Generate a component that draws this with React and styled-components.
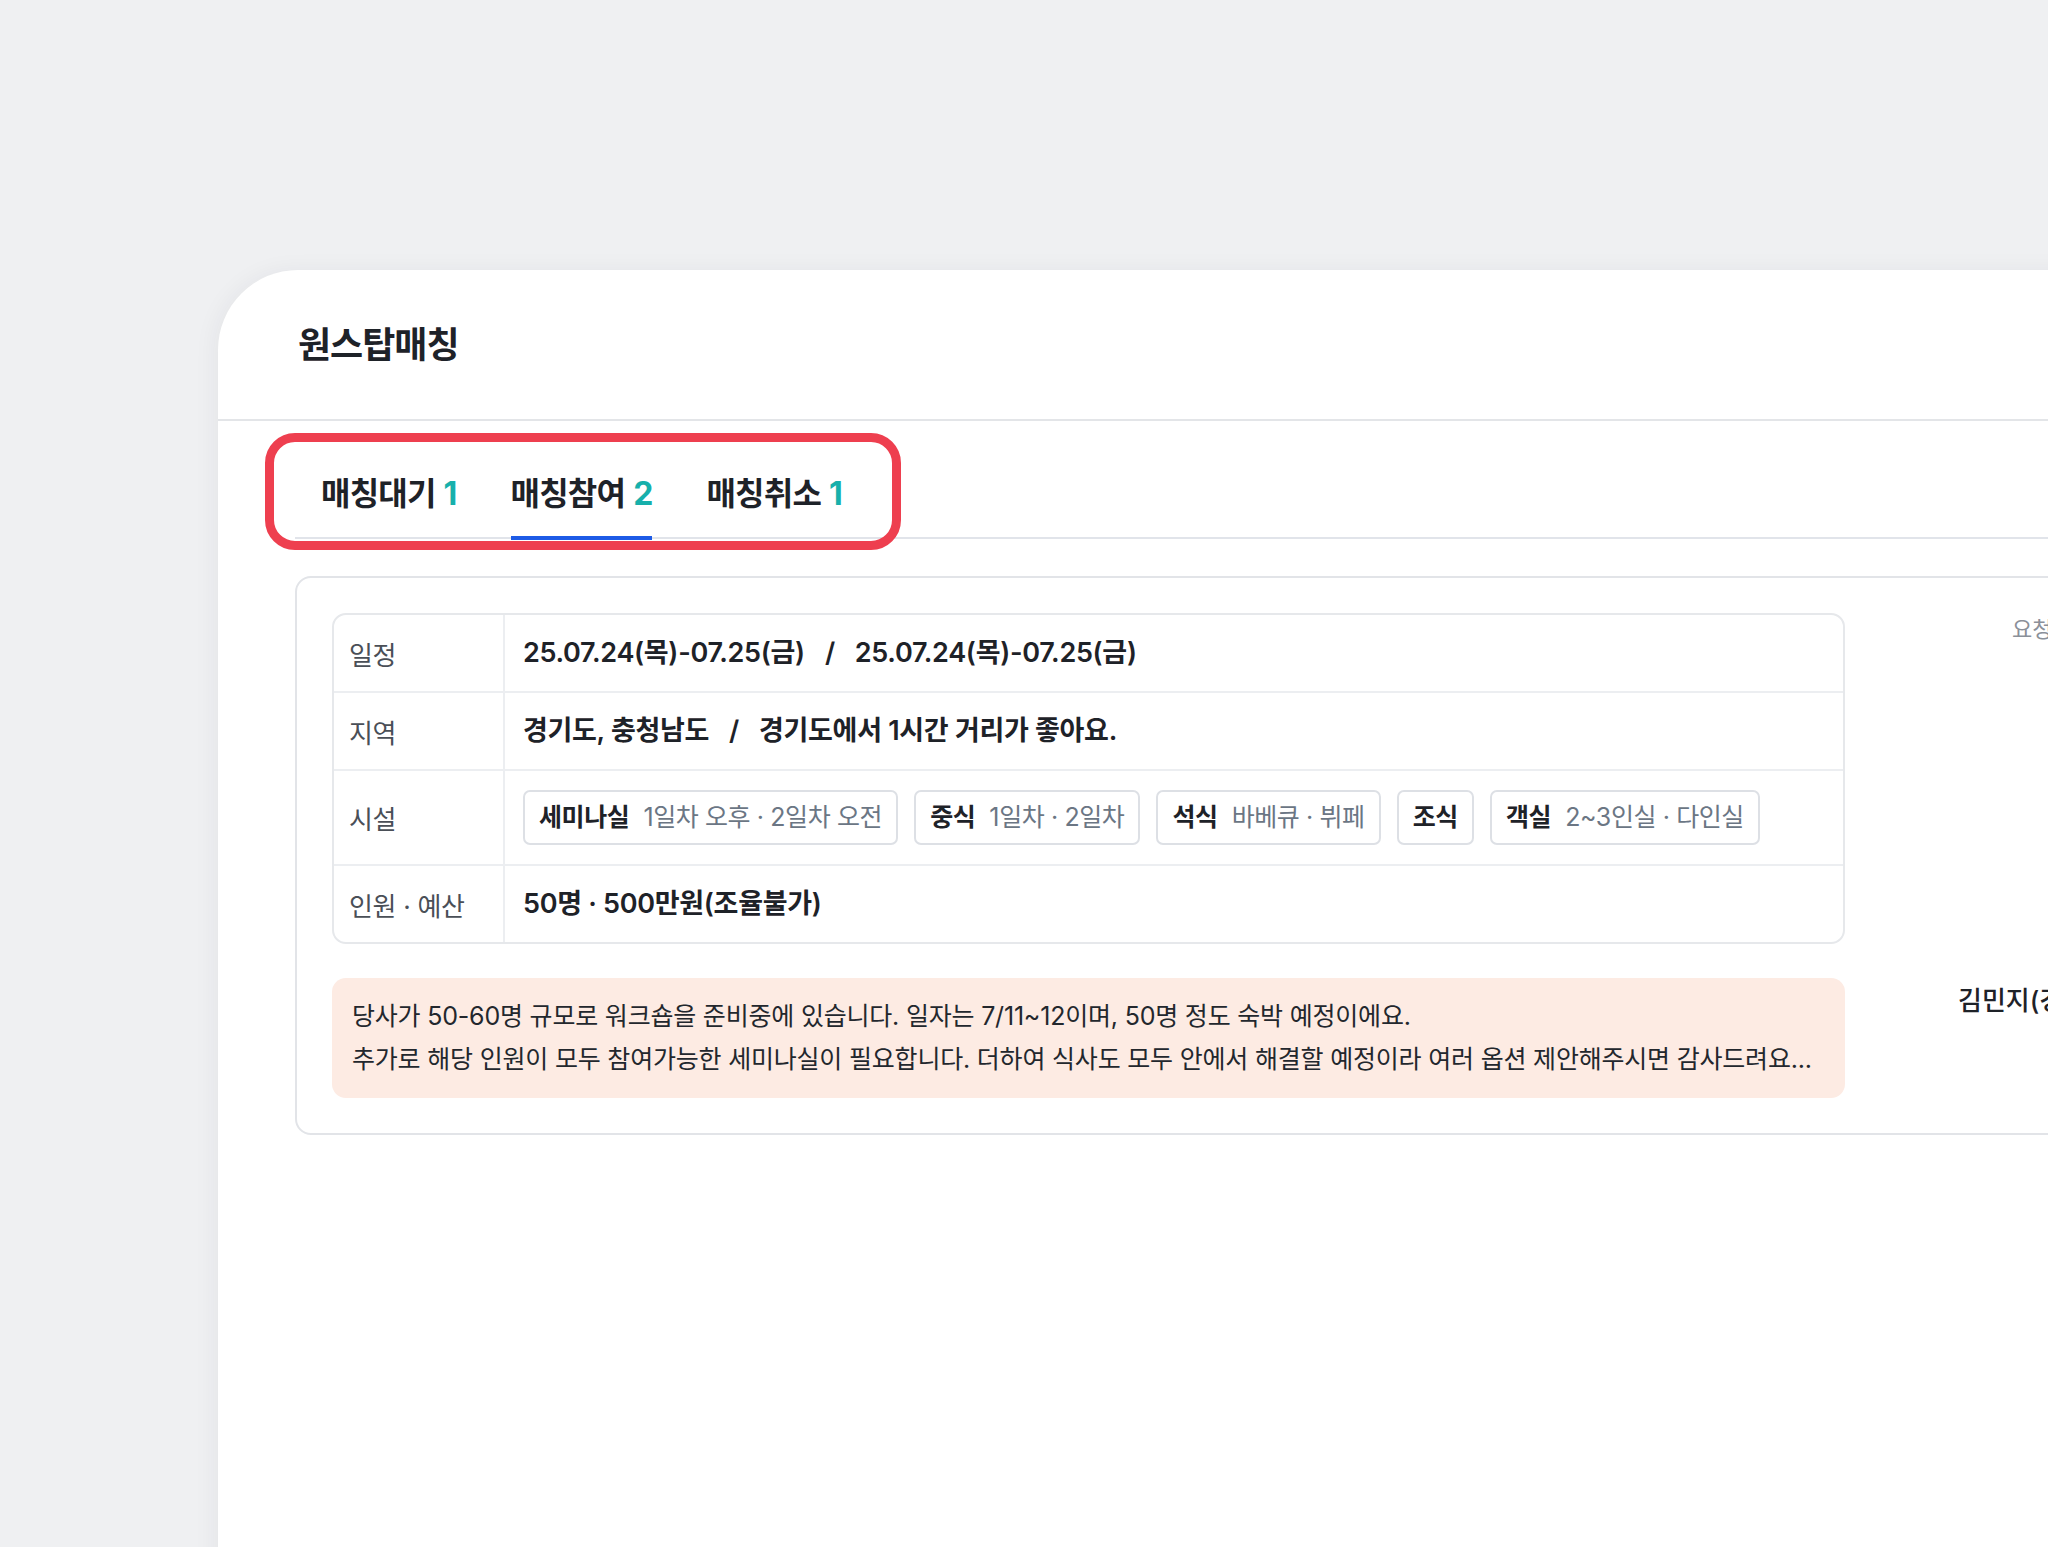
import styled, { createGlobalStyle } from "styled-components";

const GlobalStyle = createGlobalStyle`
  * {
    box-sizing: border-box;
  }

  html,
  body {
    margin: 0;
    padding: 0;
    overflow: hidden;
    background: #eff0f2;
  }

  body {
    font-family: "Inter", "Noto Sans CJK KR", "Noto Sans", sans-serif;
    color: #1e2228;
    -webkit-font-smoothing: antialiased;
  }
`;

const Page = styled.div`
  min-height: 100vh;
  padding: 270px 0 0 218px;
`;

const Panel = styled.section`
  width: 2200px;
  min-height: 1300px;
  background: #ffffff;
  border-top-left-radius: 80px;
  box-shadow: -4px 0 22px rgba(30, 40, 60, 0.05);
`;

const Header = styled.header`
  padding: 50px 0 49px 80px;
  border-bottom: 2px solid #e3e5e8;
`;

const Title = styled.h1`
  margin: 0;
  font-size: 36px;
  line-height: 50px;
  font-weight: 700;
  letter-spacing: -1px;
`;

const Content = styled.div`
  padding-left: 77px;
`;

const TabBar = styled.nav`
  position: relative;
  display: flex;
  gap: 54px;
  padding: 50px 0 0 26px;
  border-bottom: 2px solid #e1e4ea;
`;

const Tab = styled.button`
  margin: 0 0 -3px;
  padding: 0 0 20px;
  background: none;
  border: none;
  border-bottom: 4px solid ${({ $active }) => ($active ? "#1d5be6" : "transparent")};
  font-family: inherit;
  font-size: 32px;
  line-height: 45px;
  font-weight: 700;
  letter-spacing: -0.8px;
  color: #1e2228;
  cursor: pointer;
`;

const Count = styled.span`
  margin-left: 8px;
  color: #17b0ab;
`;

// annotation ring drawn over the tab strip
const Highlight = styled.span`
  position: absolute;
  left: -30px;
  top: 12px;
  width: 636px;
  height: 117px;
  border: 9px solid #ee3f4f;
  border-radius: 30px;
  pointer-events: none;
`;

const Card = styled.article`
  margin-top: 37px;
  padding: 35px;
  border: 2px solid #e2e4e8;
  border-radius: 16px;
  display: grid;
  grid-template-columns: 1513px 1fr;
  column-gap: 113px;
  row-gap: 34px;
`;

const InfoTable = styled.div`
  display: flex;
  flex-direction: column;
  border: 2px solid #e6e8eb;
  border-radius: 14px;
  overflow: hidden;
`;

const InfoRow = styled.div`
  display: grid;
  grid-template-columns: 171px 1fr;

  & + & {
    border-top: 2px solid #eceef1;
  }
`;

const Label = styled.div`
  display: flex;
  align-items: center;
  padding: 0 15px;
  border-right: 2px solid #eceef1;
  font-size: 26px;
  letter-spacing: -0.3px;
  color: #4a4f57;
`;

const Value = styled.div`
  display: flex;
  align-items: center;
  flex-wrap: wrap;
  gap: 16px;
  padding: 19px 18px;
  font-size: 27px;
  line-height: 38px;
  font-weight: 600;
  letter-spacing: -0.3px;
`;

const Sep = styled.span`
  margin: 0 4px;
`;

const Chip = styled.span`
  display: inline-flex;
  align-items: center;
  gap: 14px;
  height: 55px;
  padding: 0 14px;
  border: 2px solid #dde0e5;
  border-radius: 7px;
  font-size: 25px;
  line-height: 33px;
  font-weight: 600;
  letter-spacing: -0.4px;
  color: #1e2228;
`;

const ChipSub = styled.span`
  font-weight: 400;
  color: #6b7684;
`;

const Note = styled.div`
  padding: 17px 20px;
  background: #fdebe3;
  border-radius: 14px;
  font-size: 25px;
  line-height: 43px;
  letter-spacing: -0.2px;
  color: #23272d;
`;

const NoteLine = styled.p`
  margin: 0;
  white-space: nowrap;
`;

const Meta = styled.div`
  padding-left: ${({ $indent }) => $indent || 0}px;
  margin-top: ${({ $top }) => $top || 0}px;
  font-size: ${({ $size }) => $size}px;
  line-height: 1.5;
  font-weight: ${({ $strong }) => ($strong ? 500 : 400)};
  color: ${({ $strong }) => ($strong ? "#1e2228" : "#8b9099")};
  white-space: nowrap;
`;

const tabs = [
  { label: "매칭대기", count: 1 },
  { label: "매칭참여", count: 2, active: true },
  { label: "매칭취소", count: 1 },
];

const facilities = [
  { name: "세미나실", detail: "1일차 오후 · 2일차 오전" },
  { name: "중식", detail: "1일차 · 2일차" },
  { name: "석식", detail: "바베큐 · 뷔페" },
  { name: "조식" },
  { name: "객실", detail: "2~3인실 · 다인실" },
];

function App() {
  return (
    <>
      <GlobalStyle />
      <Page>
        <Panel>
          <Header>
            <Title>원스탑매칭</Title>
          </Header>

          <Content>
            <TabBar>
              {tabs.map((t) => (
                <Tab key={t.label} type="button" $active={t.active}>
                  {t.label}
                  <Count>{t.count}</Count>
                </Tab>
              ))}
              <Highlight />
            </TabBar>

            <Card>
              <InfoTable>
                <InfoRow>
                  <Label>일정</Label>
                  <Value>
                    25.07.24(목)-07.25(금)
                    <Sep>/</Sep>
                    25.07.24(목)-07.25(금)
                  </Value>
                </InfoRow>
                <InfoRow>
                  <Label>지역</Label>
                  <Value>
                    경기도, 충청남도
                    <Sep>/</Sep>
                    경기도에서 1시간 거리가 좋아요.
                  </Value>
                </InfoRow>
                <InfoRow>
                  <Label>시설</Label>
                  <Value>
                    {facilities.map((f) => (
                      <Chip key={f.name}>
                        {f.name}
                        {f.detail && <ChipSub>{f.detail}</ChipSub>}
                      </Chip>
                    ))}
                  </Value>
                </InfoRow>
                <InfoRow>
                  <Label>인원 · 예산</Label>
                  <Value>50명 · 500만원(조율불가)</Value>
                </InfoRow>
              </InfoTable>

              <Meta $size={22} $indent={54}>
                요청일 25.06.30
              </Meta>

              <Note>
                <NoteLine>
                  당사가 50-60명 규모로 워크숍을 준비중에 있습니다. 일자는
                  7/11~12이며, 50명 정도 숙박 예정이에요.
                </NoteLine>
                <NoteLine>
                  추가로 해당 인원이 모두 참여가능한 세미나실이 필요합니다.
                  더하여 식사도 모두 안에서 해결할 예정이라 여러 옵션
                  제안해주시면 감사드려요...
                </NoteLine>
              </Note>

              <Meta $size={26} $top={3} $strong>
                김민지(경영지원팀)
              </Meta>
            </Card>
          </Content>
        </Panel>
      </Page>
    </>
  );
}

export default App;
